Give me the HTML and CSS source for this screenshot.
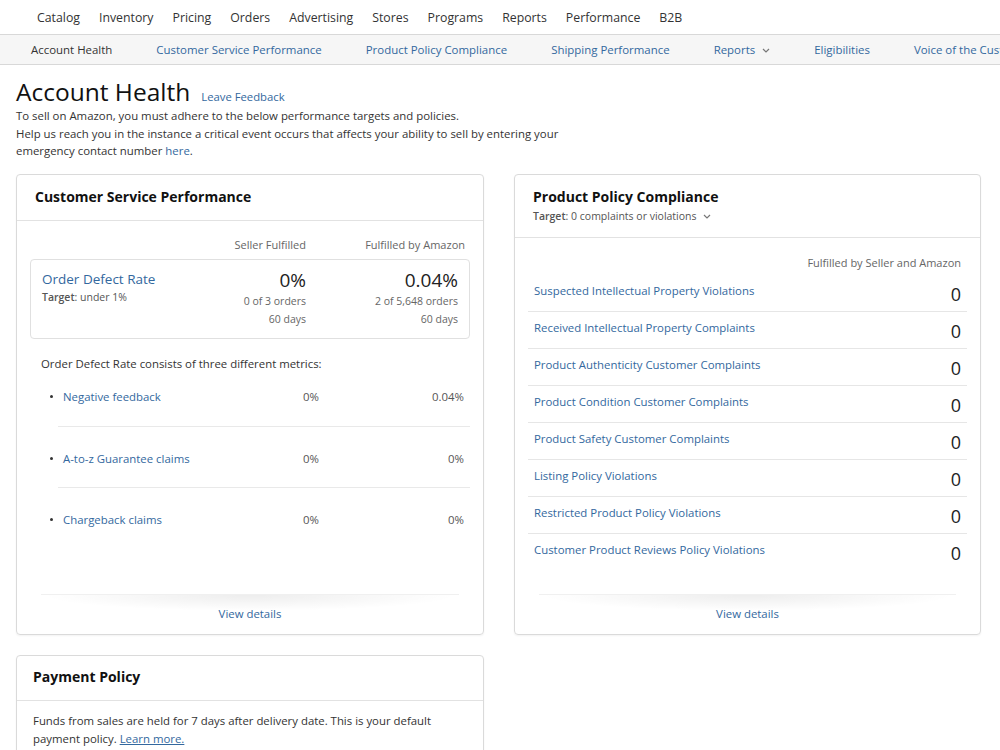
FILE: index.html
```html
<!DOCTYPE html>
<html lang="en">
<head>
    <meta charset="UTF-8">
    <meta name="viewport" content="width=device-width, initial-scale=1.0">
    <title>Account Health</title>
    <link rel="stylesheet" href="styles.css">
</head>
<body>
    <div class="topnav">
        <a href="#">Catalog</a>
        <a href="#">Inventory</a>
        <a href="#">Pricing</a>
        <a href="#">Orders</a>
        <a href="#">Advertising</a>
        <a href="#">Stores</a>
        <a href="#">Programs</a>
        <a href="#">Reports</a>
        <a href="#">Performance</a>
        <a href="#">B2B</a>
    </div>

    <div class="subnav">
        <a href="#" class="current">Account Health</a>
        <a href="#">Customer Service Performance</a>
        <a href="#">Product Policy Compliance</a>
        <a href="#">Shipping Performance</a>
        <a href="#">Reports <svg class="chevron" viewBox="0 0 8 5"><polyline points="1,1 4,4 7,1"/></svg></a>
        <a href="#">Eligibilities</a>
        <a href="#">Voice of the Customer</a>
    </div>

    <div class="page">
        <div class="intro">
            <div class="title-row">
                <h1>Account Health</h1>
                <a href="#">Leave Feedback</a>
            </div>
            <p>To sell on Amazon, you must adhere to the below performance targets and policies.<br>
            Help us reach you in the instance a critical event occurs that affects your ability to sell by entering your<br>
            emergency contact number <a href="#">here</a>.</p>
        </div>

        <div class="cards">
            <!-- Customer Service Performance -->
            <div class="card">
                <div class="card-head">
                    <h3>Customer Service Performance</h3>
                </div>
                <div class="card-body csp">
                    <div class="col-heads">
                        <span></span>
                        <span>Seller Fulfilled</span>
                        <span>Fulfilled by Amazon</span>
                    </div>
                    <div class="odr-box">
                        <div>
                            <a href="#" class="odr-name">Order Defect Rate</a>
                            <div class="target"><strong>Target</strong>: under 1%</div>
                        </div>
                        <div class="odr-val">
                            <div class="big">0%</div>
                            <div>0 of 3 orders</div>
                            <div>60 days</div>
                        </div>
                        <div class="odr-val">
                            <div class="big">0.04%</div>
                            <div>2 of 5,648 orders</div>
                            <div>60 days</div>
                        </div>
                    </div>
                    <p class="metrics-intro">Order Defect Rate consists of three different metrics:</p>
                    <ul class="metrics">
                        <li><a href="#">Negative feedback</a><span>0%</span><span>0.04%</span></li>
                        <li><a href="#">A-to-z Guarantee claims</a><span>0%</span><span>0%</span></li>
                        <li><a href="#">Chargeback claims</a><span>0%</span><span>0%</span></li>
                    </ul>
                </div>
                <div class="card-foot"><a href="#">View details</a></div>
            </div>

            <!-- Product Policy Compliance -->
            <div class="card">
                <div class="card-head">
                    <h3>Product Policy Compliance</h3>
                    <div class="target"><strong>Target</strong>: 0 complaints or violations <svg class="chevron" viewBox="0 0 8 5"><polyline points="1,1 4,4 7,1"/></svg></div>
                </div>
                <div class="card-body ppc">
                    <div class="ppc-head">Fulfilled by Seller and Amazon</div>
                    <ul class="violations">
                        <li><a href="#">Suspected Intellectual Property Violations</a><span>0</span></li>
                        <li><a href="#">Received Intellectual Property Complaints</a><span>0</span></li>
                        <li><a href="#">Product Authenticity Customer Complaints</a><span>0</span></li>
                        <li><a href="#">Product Condition Customer Complaints</a><span>0</span></li>
                        <li><a href="#">Product Safety Customer Complaints</a><span>0</span></li>
                        <li><a href="#">Listing Policy Violations</a><span>0</span></li>
                        <li><a href="#">Restricted Product Policy Violations</a><span>0</span></li>
                        <li><a href="#">Customer Product Reviews Policy Violations</a><span>0</span></li>
                    </ul>
                </div>
                <div class="card-foot"><a href="#">View details</a></div>
            </div>

            <!-- Payment Policy -->
            <div class="card payment">
                <div class="card-head">
                    <h3>Payment Policy</h3>
                </div>
                <div class="card-body">
                    <p>Funds from sales are held for 7 days after delivery date. This is your default payment policy. <a href="#" class="underline">Learn more.</a></p>
                </div>
            </div>
        </div>
    </div>
</body>
</html>
```

FILE: styles.css
```css
body {
    font-family: "Open Sans", "Liberation Sans", Arial, sans-serif;
    margin: 0;
    padding: 0;
    background-color: #fff;
    color: #333;
    font-size: 12px;
}
a {
    color: #33689e;
    text-decoration: none;
}
.chevron {
    width: 8px;
    height: 5px;
    margin-left: 4px;
    vertical-align: middle;
    fill: none;
    stroke: #777;
    stroke-width: 1.2;
}

/* top menu */
.topnav {
    display: flex;
    gap: 19px;
    height: 34px;
    align-items: center;
    padding-left: 37px;
    border-bottom: 1px solid #d8d8d8;
}
.topnav a {
    color: #333;
    font-size: 12.3px;
}

/* account health tabs */
.subnav {
    display: flex;
    gap: 44px;
    height: 29px;
    align-items: center;
    padding-left: 31px;
    background-color: #f6f6f6;
    border-bottom: 1px solid #d8d8d8;
    white-space: nowrap;
    overflow: hidden;
}
.subnav a {
    font-size: 11.45px;
}
.subnav a.current {
    color: #333;
}

.page {
    padding: 12px 16px 0;
}
.title-row {
    display: flex;
    align-items: baseline;
    gap: 11px;
}
.intro h1 {
    margin: 0;
    font-size: 24.5px;
    font-weight: normal;
    color: #111;
    line-height: 30px;
}
.title-row a {
    font-size: 11.3px;
}
.intro p {
    margin: 0;
    line-height: 17.5px;
    font-size: 11.4px;
}

.cards {
    display: grid;
    grid-template-columns: 468px 467px;
    gap: 20px 30px;
    margin-top: 14px;
}
.card {
    border: 1px solid #dadada;
    border-radius: 4px;
    display: flex;
    flex-direction: column;
    box-shadow: 0 1px 2px rgba(0, 0, 0, 0.05);
}
.card-head {
    padding: 12px 18px 13px;
    border-bottom: 1px solid #e2e2e2;
}
.card-head h3 {
    margin: 0;
    font-size: 14px;
    line-height: 20px;
    color: #111;
}
.target {
    font-size: 10.5px;
    line-height: 15px;
    color: #555;
}
.target strong {
    font-weight: 600;
}
.card-head .target {
    margin-top: 2px;
}

/* customer service performance */
.csp {
    padding: 15px 13px 0;
}
.col-heads {
    display: grid;
    grid-template-columns: 1fr 120px 159px;
    padding: 0 5px 0 12px;
    line-height: 17px;
    font-size: 11px;
    color: #666;
    text-align: right;
}
.odr-box {
    display: grid;
    grid-template-columns: 1fr 120px 152px;
    margin-top: 6px;
    padding: 8px 11px 10px 11px;
    border: 1px solid #e0e0e0;
    border-radius: 4px;
}
.odr-name {
    display: block;
    font-size: 13.5px;
    line-height: 22px;
}
.odr-box .target {
    line-height: 14px;
}
.odr-val {
    text-align: right;
    font-size: 10.5px;
    line-height: 18px;
    color: #666;
}
.odr-val .big {
    font-size: 19px;
    line-height: 24px;
    color: #222;
}
.metrics-intro {
    margin: 16px 0 0 11px;
    line-height: 17px;
    font-size: 11.4px;
}
.metrics {
    list-style: none;
    margin: 0 0 0 28px;
    padding: 0;
}
.metrics li {
    display: grid;
    grid-template-columns: 1fr 116px 145px;
    padding: 23px 6px 20px 5px;
    line-height: 17px;
    font-size: 11.4px;
    border-bottom: 1px solid #e9e9e9;
}
.metrics li:first-child {
    padding-top: 16px;
    padding-bottom: 21px;
}
.metrics li:last-child {
    border-bottom: none;
}
.metrics li a {
    position: relative;
    justify-self: start;
}
.metrics li a::before {
    content: "";
    position: absolute;
    left: -13px;
    top: 7px;
    width: 3px;
    height: 3px;
    border-radius: 50%;
    background-color: #333;
}
.metrics li span {
    text-align: right;
    color: #555;
}

/* product policy compliance */
.ppc {
    padding: 16px 13px 24px;
}
.ppc-head {
    text-align: right;
    padding-right: 6px;
    line-height: 17px;
    font-size: 11px;
    color: #666;
}
.violations {
    list-style: none;
    margin: 4px 0 0;
    padding: 0;
}
.violations li {
    display: flex;
    justify-content: space-between;
    align-items: flex-start;
    height: 36px;
    padding: 0 6px;
    border-bottom: 1px solid #e6e6e6;
}
.violations li:last-child {
    border-bottom: none;
}
.violations li a {
    font-size: 11.4px;
    line-height: 17px;
    margin-top: 7px;
}
.violations li span {
    font-size: 18px;
    line-height: 22px;
    margin-top: 8px;
    color: #222;
}

.card-foot {
    margin-top: auto;
    position: relative;
    height: 40px;
    display: flex;
    align-items: center;
    justify-content: center;
}
.card-foot::before {
    content: "";
    position: absolute;
    top: 0;
    left: 24px;
    right: 24px;
    height: 16px;
    background: radial-gradient(ellipse at top, rgba(0, 0, 0, 0.07), rgba(0, 0, 0, 0) 70%);
    border-top: 1px solid #f0f0f0;
}
.card-foot a {
    font-size: 11.4px;
}

/* payment policy */
.payment {
    grid-column: 1;
}
.payment .card-head {
    padding: 11px 16px 13px;
}
.payment .card-body {
    padding: 11px 16px 24px;
}
.payment p {
    margin: 0;
    line-height: 18px;
    font-size: 11.4px;
}
.underline {
    text-decoration: underline;
}
```
